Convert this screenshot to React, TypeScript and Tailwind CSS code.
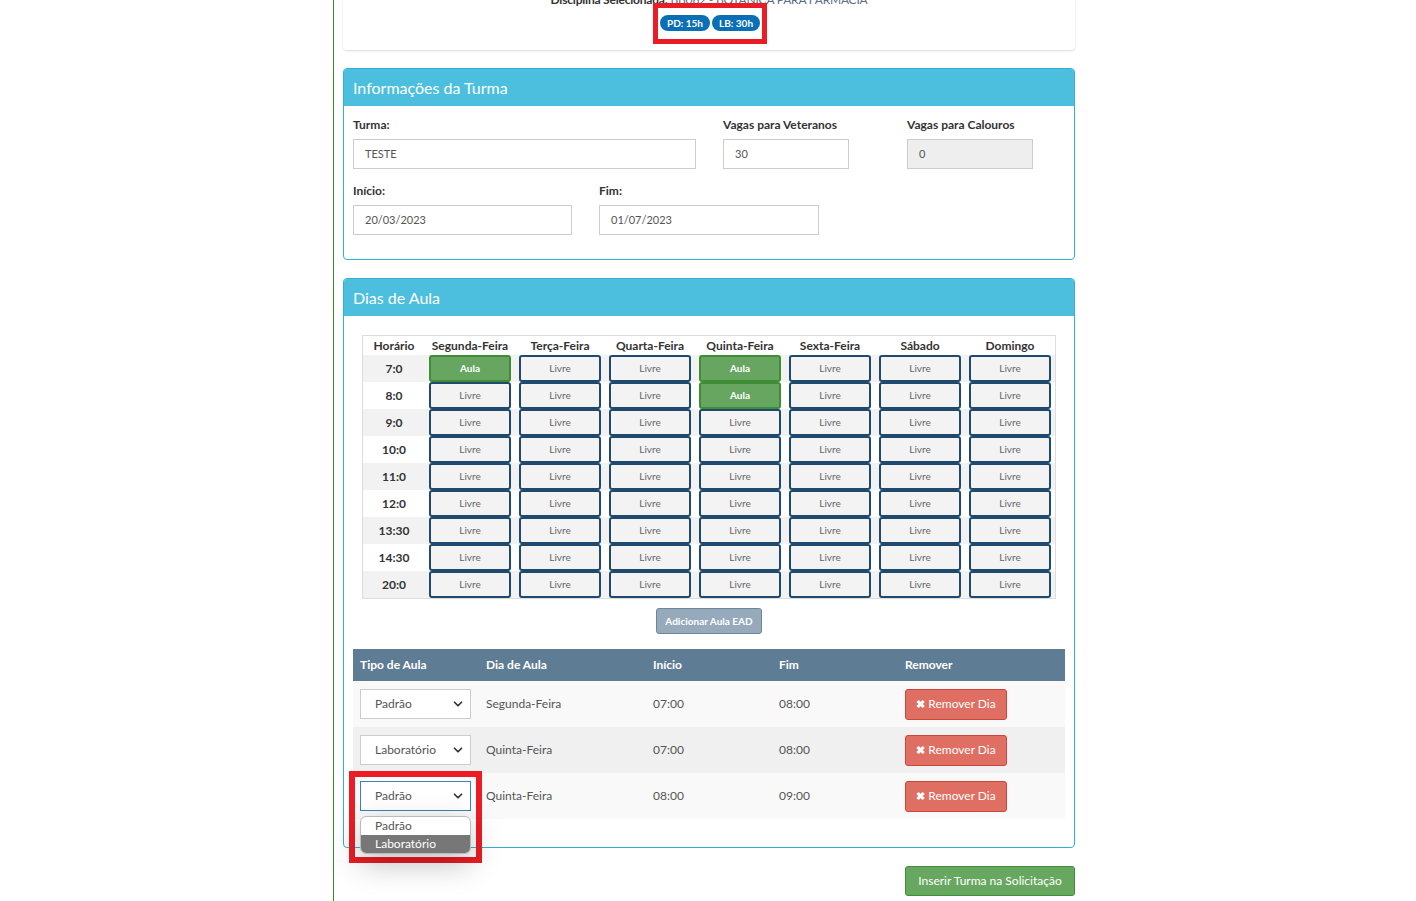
import { ChevronDown } from "lucide-react";

const DIAS = ["Segunda-Feira", "Terça-Feira", "Quarta-Feira", "Quinta-Feira", "Sexta-Feira", "Sábado", "Domingo"];
const HORARIOS = ["7:0", "8:0", "9:0", "10:0", "11:0", "12:0", "13:30", "14:30", "20:0"];

// horários já marcados como aula: [linha, coluna]
const AULAS = ["0-0", "0-3", "1-3"];

const LINHAS = [
  { tipo: "Padrão", dia: "Segunda-Feira", inicio: "07:00", fim: "08:00" },
  { tipo: "Laboratório", dia: "Quinta-Feira", inicio: "07:00", fim: "08:00" },
  { tipo: "Padrão", dia: "Quinta-Feira", inicio: "08:00", fim: "09:00" },
];

const FONTE = { fontFamily: "Lato, 'Open Sans', sans-serif" };

function Campo({ label, valor, largura, desabilitado }: { label: string; valor: string; largura: string; desabilitado?: boolean }) {
  return (
    <div className={largura}>
      <div className="mb-[6px] text-[12px] font-bold leading-[16px] text-[#333]">{label}</div>
      <div
        className={`flex h-[30px] items-center border border-[#ccc] px-[11px] pt-[1px] text-[11px] text-[#555] ${
          desabilitado ? "bg-[#eee]" : "bg-white"
        }`}
      >
        {valor}
      </div>
    </div>
  );
}

function Painel({ titulo, children }: { titulo: string; children: React.ReactNode }) {
  return (
    <div className="rounded-[4px] border border-[#31b0d5] bg-white">
      <div className="flex h-[37px] items-center rounded-t-[3px] bg-[#4bbfdd] px-[9px] text-[16px] text-white">{titulo}</div>
      {children}
    </div>
  );
}

function SelectTipo({ valor, foco }: { valor: string; foco?: boolean }) {
  return (
    <div
      className={`flex h-[30px] w-[111px] items-center justify-between border bg-white pl-[14px] pr-[5px] text-[12px] text-[#555] ${
        foco ? "border-[#3b83b6]" : "border-[#ccc]"
      }`}
    >
      <span>{valor}</span>
      <ChevronDown size={14} strokeWidth={3} className="text-[#333]" />
    </div>
  );
}

export default function App() {
  return (
    <div className="min-h-[901px] bg-white" style={FONTE}>
      <div className="ml-[333px] min-h-[901px] w-[751px] border-l border-[#3d8b2f] px-[9px]">
        {/* cabeçalho com a disciplina */}
        <div className="relative flex flex-col rounded-b-[4px] bg-white pb-[19px] shadow-[0_1px_2px_rgba(0,0,0,0.15)]">
          <div className="-mt-[8px] h-[16px] text-center text-[12px] leading-[16px] tracking-[-0.2px] text-[#333]">
            <span className="font-bold">Disciplina Selecionada:</span>{" "}
            <span className="text-[#5c6f86]">BB062 - BOTÂNICA PARA FARMÁCIA</span>
          </div>
          <div className="mt-[7px] flex justify-center gap-[2px] pl-[2px]">
            <span className="rounded-full bg-[#0b6fb6] px-[7px] py-[2px] text-[10px] font-bold leading-[12px] text-white">PD: 15h</span>
            <span className="rounded-full bg-[#0b6fb6] px-[7px] py-[2px] text-[10px] font-bold leading-[12px] text-white">LB: 30h</span>
          </div>
          <div className="pointer-events-none absolute left-[310px] top-[3px] h-[41px] w-[114px] border-[5px] border-[#ec1c24]" />
        </div>

        <div className="mt-[18px]">
          <Painel titulo="Informações da Turma">
            <div className="px-[9px] pb-[24px] pt-[11px]">
              <div className="flex">
                <Campo label="Turma:" valor="TESTE" largura="w-[343px]" />
                <Campo label="Vagas para Veteranos" valor="30" largura="ml-[27px] w-[126px]" />
                <Campo label="Vagas para Calouros" valor="0" largura="ml-[58px] w-[126px]" desabilitado />
              </div>
              <div className="mt-[14px] flex">
                <Campo label="Início:" valor="20/03/2023" largura="w-[219px]" />
                <Campo label="Fim:" valor="01/07/2023" largura="ml-[27px] w-[220px]" />
              </div>
            </div>
          </Painel>
        </div>

        <div className="mt-[18px]">
          <Painel titulo="Dias de Aula">
            <div className="relative px-[9px] pb-[28px] pt-[19px]">
              {/* grade de horários */}
              <div className="mx-auto w-[694px] border border-[#ddd]">
                <div className="grid h-[19px] grid-cols-[62px_repeat(7,90px)] items-center text-center text-[12px] font-bold text-[#333]">
                  <div>Horário</div>
                  {DIAS.map((d) => (
                    <div key={d}>{d}</div>
                  ))}
                </div>
                {HORARIOS.map((h, i) => (
                  <div
                    key={h}
                    className={`grid h-[27px] grid-cols-[62px_repeat(7,90px)] items-center ${i % 2 === 0 ? "bg-[#f2f2f2]" : "bg-white"}`}
                  >
                    <div className="text-center text-[12px] font-bold text-[#333]">{h}</div>
                    {DIAS.map((d, j) => {
                      const aula = AULAS.includes(`${i}-${j}`);
                      return (
                        <div key={d} className="flex justify-center">
                          <div
                            className={`flex h-[27px] w-[82px] items-center justify-center rounded-[3px] border-2 text-[10px] ${
                              aula
                                ? "border-[#3f8d34] bg-[#67a660] font-bold text-white"
                                : "border-[#1f4a6e] bg-[#f3f3f3] text-[#666]"
                            }`}
                          >
                            {aula ? "Aula" : "Livre"}
                          </div>
                        </div>
                      );
                    })}
                  </div>
                ))}
              </div>

              <div className="mt-[9px] flex justify-center">
                <div className="flex h-[26px] w-[106px] items-center justify-center rounded-[3px] border border-[#6b879c] bg-[#97aabb] text-[10px] font-bold text-white">
                  Adicionar Aula EAD
                </div>
              </div>

              {/* dias escolhidos */}
              <div className="mt-[15px]">
                <div className="grid h-[32px] grid-cols-[126px_167px_126px_126px_167px] items-center bg-[#5e7c94] text-[12px] font-bold text-white">
                  <div className="pl-[7px]">Tipo de Aula</div>
                  <div className="pl-[7px]">Dia de Aula</div>
                  <div className="pl-[7px]">Início</div>
                  <div className="pl-[7px]">Fim</div>
                  <div className="pl-[7px]">Remover</div>
                </div>
                {LINHAS.map((l, i) => (
                  <div
                    key={i}
                    className={`grid h-[46px] grid-cols-[126px_167px_126px_126px_167px] items-center text-[12px] text-[#555] ${
                      i % 2 === 1 ? "bg-[#f0f0f0]" : "bg-[#f9f9f9]"
                    }`}
                  >
                    <div className="pl-[7px]">
                      <SelectTipo valor={l.tipo} foco={i === 2} />
                    </div>
                    <div className="pl-[7px]">{l.dia}</div>
                    <div className="pl-[7px]">{l.inicio}</div>
                    <div className="pl-[7px]">{l.fim}</div>
                    <div className="pl-[7px]">
                      <div className="flex h-[31px] w-[102px] items-center justify-center gap-[3px] rounded-[3px] border border-[#d2433a] bg-[#e06f63] text-[12px] text-white">
                        <span className="text-[11px] font-bold">✖</span>
                        Remover Dia
                      </div>
                    </div>
                  </div>
                ))}
              </div>

              {/* lista aberta do select da última linha */}
              <div className="pointer-events-none absolute left-[5px] top-[455px] h-[92px] w-[133px] border-[6px] border-[#ec1c24]">
                <div className="absolute left-[5px] top-[39px] w-[111px] overflow-hidden rounded-[6px] border border-[#bbb] bg-white text-[12px] shadow-[0_10px_30px_rgba(0,0,0,0.25)]">
                  <div className="h-[18px] pl-[14px] leading-[18px] text-[#555]">Padrão</div>
                  <div className="h-[18px] bg-[#777] pl-[14px] leading-[18px] text-white">Laboratório</div>
                </div>
              </div>
            </div>
          </Painel>
        </div>

        <div className="mt-[18px] flex justify-end">
          <div className="flex h-[30px] w-[170px] items-center justify-center rounded-[3px] border border-[#3f8f35] bg-[#67a760] text-[12px] text-white">
            Inserir Turma na Solicitação
          </div>
        </div>
      </div>
    </div>
  );
}
